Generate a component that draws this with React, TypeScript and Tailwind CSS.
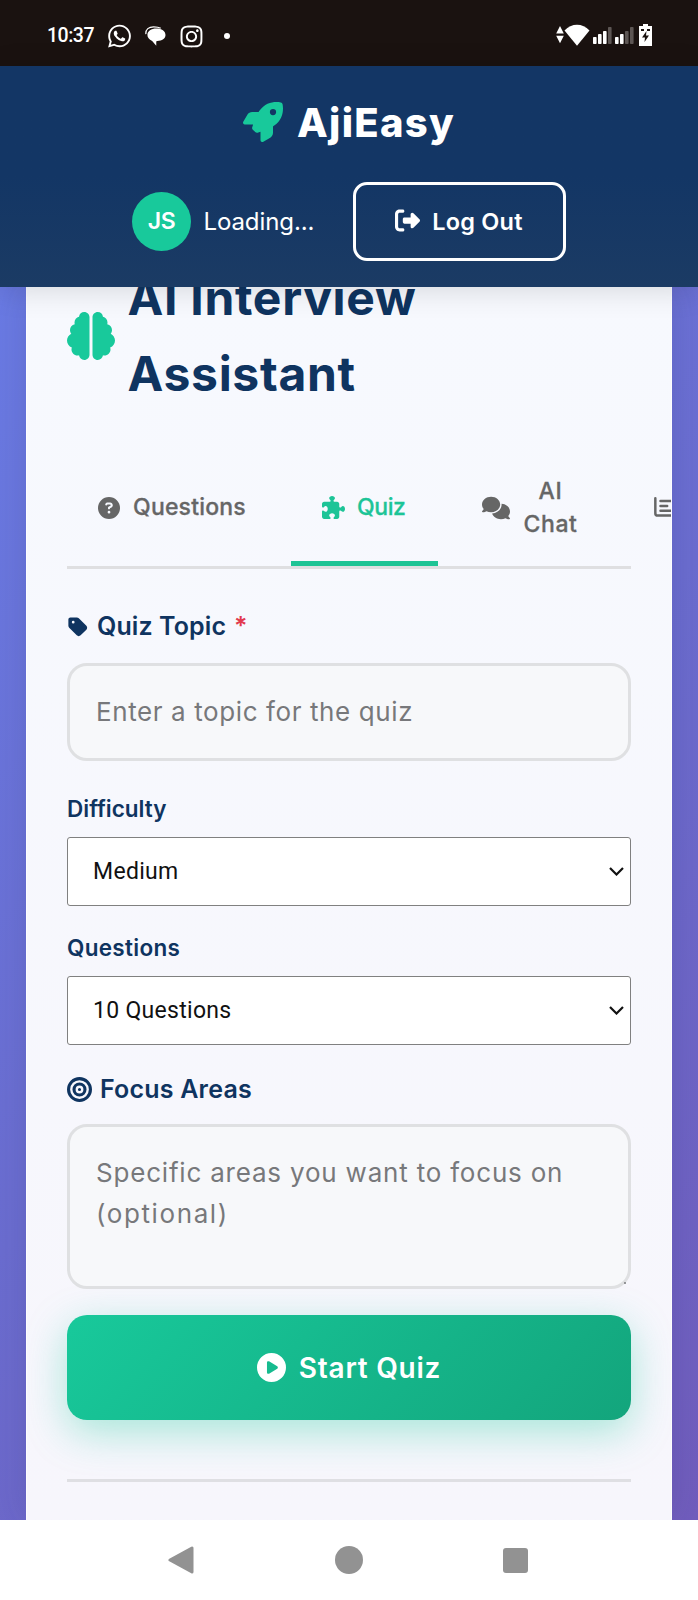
import type { ReactNode } from 'react';
import {
  FaBrain,
  FaBullseye,
  FaCirclePlay,
  FaCircleQuestion,
  FaComments,
  FaInstagram,
  FaPuzzlePiece,
  FaRightFromBracket,
  FaRocket,
  FaTag,
  FaWhatsapp,
} from 'react-icons/fa6';

function SignalBars({ active }: { active: number }) {
  return (
    <svg viewBox="0 0 19 17" className="h-[17px] w-[19px]">
      {[7, 10, 13, 17].map((h, i) => (
        <rect key={h} x={i * 5} y={17 - h} width="3.6" height={h} rx="0.8" fill={i < active ? '#fff' : '#5d5654'} />
      ))}
    </svg>
  );
}

function StatusBar() {
  return (
    <div className="flex h-[66px] shrink-0 items-center bg-[#1a1210] pt-[6px] pr-[46px] pl-[47px] text-white">
      <span className="w-[47px] font-['Roboto',sans-serif] text-[19.500px] leading-none font-medium tracking-[-0.5px]">10:37</span>
      <FaWhatsapp className="ml-[13px] h-[26px] w-[25px]" />
      <svg viewBox="0 0 22 21" className="ml-[13px] h-[20px] w-[21px]" fill="#fff">
        <path d="M.9 8.500C.5 3.500 4 .8 9 .8c3 0 5.500.4 7.500 1.600" fill="none" stroke="#fff" strokeWidth="1.300" />
        <path d="M12 2.500C17.500 2.500 21.500 5 21.500 9.500c0 4-3.700 6-8.500 6.200-.9 0-1.200.4-1.200 1.200V20.800L7.500 15.700C4.200 14.300 2.500 12 2.500 9.200 2.500 5.300 6.500 2.500 12 2.500z" />
      </svg>
      <FaInstagram className="ml-[14px] h-[25px] w-[23px]" />
      <span className="ml-[21px] size-[6px] rounded-full bg-white" />
      <div className="mb-[2px] ml-auto flex items-center">
        <svg viewBox="0 0 8 18" className="h-[18px] w-[8px]" fill="#fff">
          <path d="M4 0 7.800 7.500H.2zM.2 9.800h7.600L4 17.300z" />
        </svg>
        <svg viewBox="0 0 26 22" className="h-[22px] w-[26px]" fill="#fff">
          <path d="M.5 6.500C7.500-1.300 18.500-1.300 25.500 6.500L13 21.800z" />
        </svg>
        <div className="ml-[3px] flex gap-[3px]">
          <SignalBars active={3} />
          <SignalBars active={2} />
        </div>
        <svg viewBox="0 0 13 22" className="ml-[5px] h-[22px] w-[13px]">
          <path d="M4 0h5v2h4v20H0V2h4z" fill="#fff" />
          <path d="M2 5h3v2H2zM8 5h3v2H8zM7.500 7 3 13.500h3L5.500 18 10 11.500H7z" fill="#1a1210" />
        </svg>
      </div>
    </div>
  );
}

function Header() {
  return (
    <header className="relative z-10 h-[221px] shrink-0 bg-linear-to-b from-[#133665] from-50% to-[#1b3b64] pt-[28px] text-white shadow-[0_4px_28px_rgba(0,0,0,0.13)]">
      <div className="flex h-[56px] items-center justify-center">
        <FaRocket className="size-[40px] text-[#18c99b]" />
        <span className="mt-[2px] ml-[14px] text-[40px] leading-none font-extrabold tracking-[1.3px]">AjiEasy</span>
      </div>
      <div className="mt-[31px] flex h-[80px] items-center pl-[132px]">
        <div className="flex size-[59px] items-center justify-center rounded-full bg-[#18c99b] pt-px text-[23px] leading-none font-semibold tracking-[-0.5px]">
          JS
        </div>
        <span className="mt-[2px] ml-[12.500px] w-[111px] text-[24px] leading-none tracking-[-0.1px] whitespace-nowrap">Loading...</span>
        <button className="ml-[38px] flex h-[79px] w-[213px] items-center justify-center rounded-[14px] border-3 border-white">
          <FaRightFromBracket className="mb-[2px] size-[25px]" />
          <span className="mt-px ml-[12px] text-[23.500px] leading-none font-semibold tracking-[0.2px]">Log Out</span>
        </button>
      </div>
    </header>
  );
}

function Tabs() {
  return (
    <nav className="mt-[49px] flex h-[109px] items-center border-b-3 border-[#dfdfe1] text-[23px] leading-[32.500px] font-medium text-[#666]">
      <div className="flex h-full w-[224px] shrink-0 items-center pb-[10px] pl-[31px]">
        <FaCircleQuestion className="size-[22px]" />
        <span className="ml-[13px] [-webkit-text-stroke:0.3px] tracking-[0.2px]">Questions</span>
      </div>
      <div className="flex h-full w-[147px] shrink-0 items-center border-b-[5px] border-[#1ec495] pb-[5px] pl-[31px] text-[#1dc497]">
        <FaPuzzlePiece className="size-[23px]" />
        <span className="ml-[12px] [-webkit-text-stroke:0.3px] tracking-[-0.4px]">Quiz</span>
      </div>
      <div className="flex h-full w-[185px] shrink-0 items-center pb-[10px] pl-[44px]">
        <FaComments className="size-[28px]" />
        <span className="ml-[13px] w-[55px] text-center [-webkit-text-stroke:0.3px] tracking-[0.6px]">
          AI
          <br />
          Chat
        </span>
      </div>
      <svg viewBox="0 0 22 22" className="mb-[10px] ml-[31px] size-[21px] shrink-0" fill="none" stroke="currentColor" strokeWidth="2.600" strokeLinecap="round">
        <path d="M1.400 1.400v15.500a2.600 2.600 0 0 0 2.600 2.600h16M6.800 4.300h11M6.800 9.500h7M6.800 14.500h13" />
      </svg>
    </nav>
  );
}

function SelectBox({ children }: { children: ReactNode }) {
  return (
    <div className="flex h-[69px] items-center rounded-[3px] border border-[#808080] bg-white pr-[6px] pl-[25px] font-['Roboto',sans-serif] text-[23px] leading-none text-[#111]">
      <span className="tracking-[0.3px]">{children}</span>
      <svg viewBox="0 0 15 9" className="ml-auto h-[9px] w-[15px]" fill="none" stroke="#111" strokeWidth="2.200">
        <path d="M1 1l6.500 6.500L14 1" />
      </svg>
    </div>
  );
}

function BottomNav() {
  return (
    <div className="flex h-[80px] shrink-0 items-center bg-white pl-[168px]">
      <svg viewBox="0 0 26 28" className="h-[28px] w-[26px]">
        <path d="M24 2v24L2 14z" fill="#929292" stroke="#929292" strokeWidth="3" strokeLinejoin="round" />
      </svg>
      <span className="ml-[141px] size-[28px] rounded-full bg-[#929292]" />
      <span className="ml-[140px] size-[25px] rounded-[3px] bg-[#929292]" />
    </div>
  );
}

export default function App() {
  return (
    <div className="flex h-[1600px] w-[698px] flex-col overflow-hidden bg-white font-['Inter',sans-serif]">
      <StatusBar />
      <Header />
      <main className="min-h-0 flex-1 overflow-hidden bg-[linear-gradient(135deg,#6a7be4_0%,#6b6dd0_50%,#715dbd_100%)] px-[26px]">
        <div className="h-full overflow-hidden border-x border-white/70 bg-linear-to-b from-[#f7f9fe] to-[#f7f6fc] px-[40px] shadow-[0_0_36px_rgba(40,40,90,0.15)]">
          <h1 className="-mt-[27.500px] flex h-[151px] items-center text-[48px] leading-[75.500px] font-bold text-[#0f3460]">
            <FaBrain className="mt-[2px] size-[48px] shrink-0 text-[#18c99b]" />
            <span className="mt-px ml-[12.500px] tracking-[0.7px]">
              AI Interview
              <br />
              Assistant
            </span>
          </h1>
          <Tabs />

          <div className="mt-[41px] flex h-[34px] items-center text-[25px] leading-none font-semibold text-[#0f3460]">
            <FaTag className="size-[22px]" />
            <span className="ml-[8px] tracking-[0.1px]">Quiz Topic</span>
            <span className="ml-[8px] text-[#e23a4e]">*</span>
          </div>
          <div className="mt-[19px] flex h-[98px] items-center rounded-[20px] border-3 border-[#dfe0e2] bg-[#f7f8fa] pl-[26px] text-[26px] leading-none text-[#77787b]">
            <span className="tracking-[0.6px]">Enter a topic for the quiz</span>
          </div>

          <div className="mt-[33.500px] h-[30px] text-[22.500px] leading-[30px] font-semibold text-[#0f3460]">Difficulty</div>
          <div className="mt-[12.500px]">
            <SelectBox>Medium</SelectBox>
          </div>
          <div className="mt-[27.500px] h-[30px] text-[22.500px] leading-[30px] font-semibold tracking-[0.3px] text-[#0f3460]">Questions</div>
          <div className="mt-[12.500px]">
            <SelectBox>10 Questions</SelectBox>
          </div>

          <div className="mt-[27.500px] flex h-[34px] items-center text-[25px] leading-none font-semibold text-[#0f3460]">
            <FaBullseye className="size-[25px]" />
            <span className="ml-[8px] tracking-[0.2px]">Focus Areas</span>
          </div>
          <div className="relative mt-[18px] h-[165px] rounded-[20px] border-3 border-[#dfe0e2] bg-[#f7f8fa] pt-[25px] pl-[26px] text-[26px] leading-[41px] text-[#77787b]">
            <div className="tracking-[0.8px] whitespace-nowrap">Specific areas you want to focus on</div>
            <div className="tracking-[1.600px]">(optional)</div>
            <span className="absolute right-[2px] bottom-[2px] size-[2px] rounded-full bg-[#77787b]" />
          </div>

          <button className="mt-[26px] flex h-[105px] w-full items-center justify-center rounded-[20px] bg-[linear-gradient(135deg,#18c99b,#13a57c)] text-white shadow-[0_12px_40px_rgba(24,201,155,0.36)]">
            <FaCirclePlay className="size-[29px]" />
            <span className="ml-[13px] text-[28px] leading-none font-semibold tracking-[0.75px]">Start Quiz</span>
          </button>
          <div className="mt-[59px] h-[3px] bg-[#dfdfe3]" />
        </div>
      </main>
      <BottomNav />
    </div>
  );
}
